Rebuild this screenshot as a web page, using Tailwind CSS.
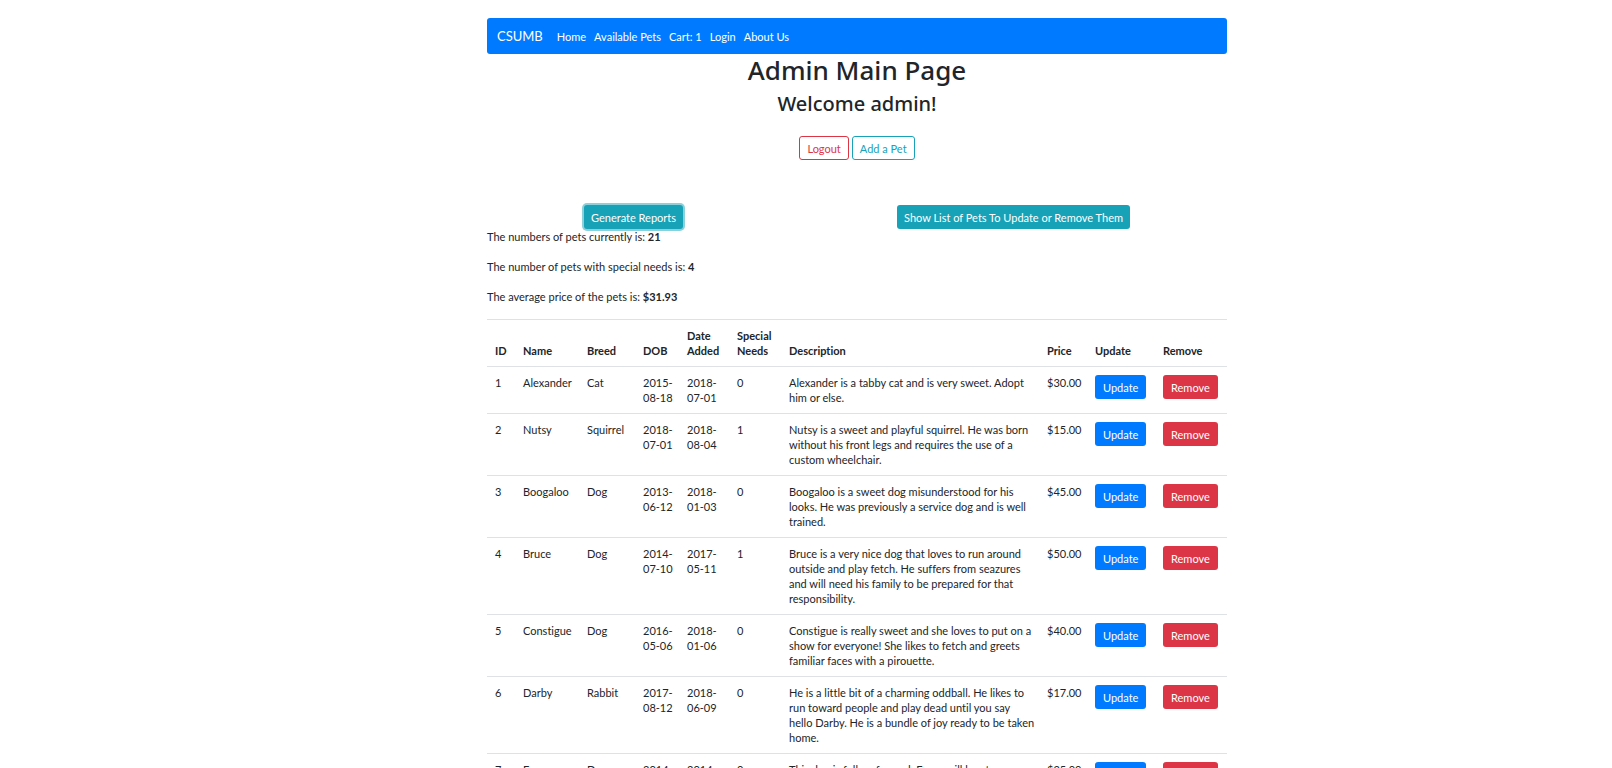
<!DOCTYPE html>
<html lang="en">
<head>
<meta charset="utf-8">
<title>Admin Main Page</title>
<script src="https://cdn.jsdelivr.net/npm/@tailwindcss/browser@4"></script>
</head>
<body class="bg-white pl-[102px] font-['Lato','Noto_Sans',sans-serif] text-[11px] leading-[15px] text-[#212529] overflow-x-hidden [font-variant-ligatures:none]">
<div class="mx-auto max-w-[740px] pt-[18px]">
  <nav class="flex h-9 items-center rounded-[3px] bg-[#007bff] px-[10px] text-white">
    <a href="#" class="mr-[14px] text-[13px] leading-5">CSUMB</a>
    <ul class="flex gap-2">
      <li><a href="#">Home</a></li>
      <li><a href="#">Available Pets</a></li>
      <li><a href="#">Cart: 1</a></li>
      <li><a href="#">Login</a></li>
      <li><a href="#">About Us</a></li>
    </ul>
  </nav>
  <header class="text-center">
    <h1 class="mb-[6px] font-['Noto_Sans',sans-serif] text-[26px] leading-8 font-medium">Admin Main Page</h1>
    <h2 class="font-['Noto_Sans',sans-serif] text-[20px] leading-6 font-medium">Welcome admin!</h2>
    <div class="mt-5 flex justify-center gap-[3px]">
      <button type="button" class="h-6 rounded-[3px] border border-[#dc3545] px-[7px] text-[#dc3545]">Logout</button>
      <button type="button" class="h-6 rounded-[3px] border border-[#17a2b8] px-[7px] text-[#17a2b8]">Add a Pet</button>
    </div>
  </header>
  <main>
    <div class="mt-[45px] flex justify-between px-[97px]">
      <button type="button" class="h-6 rounded-[3px] bg-[#17a2b8] px-[7px] text-white ring-2 ring-[#17a2b8]/50">Generate Reports</button>
      <button type="button" class="h-6 rounded-[3px] bg-[#17a2b8] px-[7px] text-white">Show List of Pets To Update or Remove Them</button>
    </div>
    <div class="flex flex-col gap-[15px]">
      <p>The numbers of pets currently is: <strong>21</strong></p>
      <p>The number of pets with special needs is: <strong>4</strong></p>
      <p>The average price of the pets is: <strong>$31.93</strong></p>
    </div>
    <table class="mt-[15px] w-full table-fixed whitespace-nowrap text-left">
      <colgroup><col class="w-7"><col class="w-16"><col class="w-14"><col class="w-11"><col class="w-[50px]"><col class="w-[52px]"><col><col class="w-12"><col class="w-[68px]"><col class="w-[72px]"></colgroup>
      <thead>
        <tr class="border-y border-[#dee2e6] align-bottom *:p-2 *:font-bold"><th>ID</th><th>Name</th><th>Breed</th><th>DOB</th><th>Date<br>Added</th><th>Special<br>Needs</th><th>Description</th><th>Price</th><th>Update</th><th>Remove</th></tr>
      </thead>
      <tbody id="pets"></tbody>
    </table>
  </main>
</div>
<template id="pet-row">
  <tr class="border-t border-[#dee2e6] align-top *:p-2"><td></td><td></td><td></td><td></td><td></td><td></td><td></td><td></td>
    <td><button type="button" class="block h-6 rounded-[3px] bg-[#007bff] px-2 text-white">Update</button></td>
    <td><button type="button" class="block h-6 rounded-[3px] bg-[#dc3545] px-2 text-white">Remove</button></td></tr>
</template>
<script>
const pets = [
  [1,'Alexander','Cat','2015-<br>08-18','2018-<br>07-01',0,'Alexander is a tabby cat and is very sweet. Adopt<br>him or else.','$30.00'],
  [2,'Nutsy','Squirrel','2018-<br>07-01','2018-<br>08-04',1,'Nutsy is a sweet and playful squirrel. He was born<br>without his front legs and requires the use of a<br>custom wheelchair.','$15.00'],
  [3,'Boogaloo','Dog','2013-<br>06-12','2018-<br>01-03',0,'Boogaloo is a sweet dog misunderstood for his<br>looks. He was previously a service dog and is well<br>trained.','$45.00'],
  [4,'Bruce','Dog','2014-<br>07-10','2017-<br>05-11',1,'Bruce is a very nice dog that loves to run around<br>outside and play fetch. He suffers from seazures<br>and will need his family to be prepared for that<br>responsibility.','$50.00'],
  [5,'Constigue','Dog','2016-<br>05-06','2018-<br>01-06',0,'Constigue is really sweet and she loves to put on a<br>show for everyone! She likes to fetch and greets<br>familiar faces with a pirouette.','$40.00'],
  [6,'Darby','Rabbit','2017-<br>08-12','2018-<br>06-09',0,'He is a little bit of a charming oddball. He likes to<br>run toward people and play dead until you say<br>hello Darby. He is a bundle of joy ready to be taken<br>home.','$17.00'],
  [7,'Fozzy','Dog','2014-<br>04-11','2014-<br>08-02',0,'This dog is fully reformed. Fozzy will be at','$25.00'],
];
const body = document.getElementById('pets');
const template = document.getElementById('pet-row');
pets.forEach((pet) => {
  const row = template.content.cloneNode(true);
  const cells = row.querySelectorAll('td');
  pet.forEach((value, n) => { cells[n].innerHTML = value; });
  body.append(row);
});
</script>
</body>
</html>
